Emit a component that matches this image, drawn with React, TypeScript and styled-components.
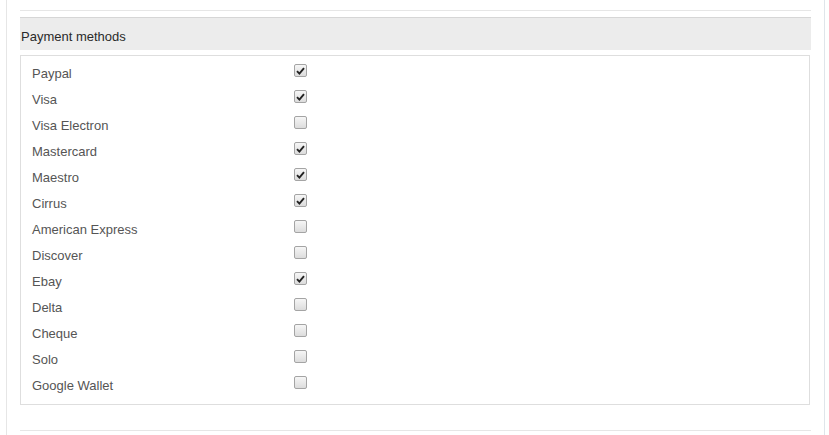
import React from "react";
import styled, { createGlobalStyle } from "styled-components";

const GlobalStyle = createGlobalStyle`
  html, body { margin: 0; padding: 0; background: #ffffff; }
  body { font-family: "Liberation Sans", Arial, sans-serif; }
`;

const Page = styled.div`
  padding: 0 4px 0 6px;
  height: 435px;
  box-sizing: border-box;
`;

const Frame = styled.div`
  width: 819px;
  box-sizing: border-box;
  height: 435px;
  border-left: 1px solid #e6e6e6;
  border-right: 1px solid #dfe5ea;
  padding: 0 13px;
  display: flex;
  flex-direction: column;
`;

const Rule = styled.div<{ $top: number }>`
  height: 1px;
  background: #e6e6e6;
  margin-top: ${(p) => p.$top}px;
`;

const SectionHeader = styled.div`
  margin-top: 6px;
  height: 33px;
  box-sizing: border-box;
  border-top: 1px solid #d6d6d6;
  background: #ececec;
  display: flex;
  align-items: center;
  padding: 5px 0 0 1px;
  font-size: 13px;
  color: #2a2a2a;
`;

const Box = styled.div`
  margin-top: 5px;
  margin-right: 1px;
  border: 1px solid #dedede;
  padding: 4px 0 6px 11px;
`;

const Row = styled.label`
  display: grid;
  grid-template-columns: 262px 13px;
  align-items: center;
  height: 26px;
  font-size: 13px;
  color: #555;
`;

const Check = styled.span<{ $on: boolean }>`
  width: 11px;
  height: 11px;
  margin-top: -5px;
  border: 1px solid #a4a4a4;
  border-radius: 2px;
  background: linear-gradient(#f6f6f6, #dcdcdc);
  display: flex;
  align-items: center;
  justify-content: center;
`;

const methods: [string, boolean][] = [
  ["Paypal", true],
  ["Visa", true],
  ["Visa Electron", false],
  ["Mastercard", true],
  ["Maestro", true],
  ["Cirrus", true],
  ["American Express", false],
  ["Discover", false],
  ["Ebay", true],
  ["Delta", false],
  ["Cheque", false],
  ["Solo", false],
  ["Google Wallet", false],
];

export default function App() {
  return (
    <>
      <GlobalStyle />
      <Page>
        <Frame>
          <Rule $top={10} />
          <SectionHeader>Payment methods</SectionHeader>
          <Box>
            {methods.map(([name, on]) => (
              <Row key={name}>
                <span>{name}</span>
                <Check $on={on}>
                  {on && (
                    <svg width="9" height="8" viewBox="0 0 9 8">
                      <path d="M1 4.2 L3.4 6.6 L8 1.2" fill="none" stroke="#222" strokeWidth="1.9" />
                    </svg>
                  )}
                </Check>
              </Row>
            ))}
          </Box>
          <Rule $top={25} />
        </Frame>
      </Page>
    </>
  );
}
